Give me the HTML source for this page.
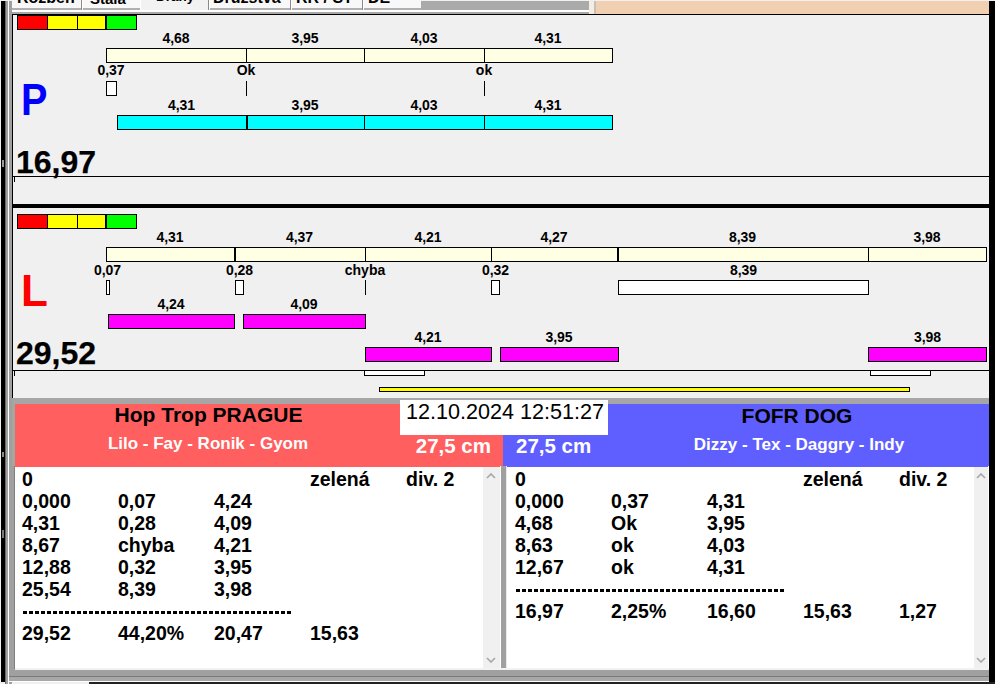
<!DOCTYPE html>
<html><head><meta charset="utf-8"><style>
html,body{margin:0;padding:0;}
body{width:995px;height:684px;overflow:hidden;position:relative;background:#f0f0f0;font-family:"Liberation Sans", sans-serif;}
body>div,body>svg{position:absolute;}
</style></head><body>
<div style="left:1px;top:1px;width:4px;height:681px;background:#000;"></div>
<div style="left:5px;top:1px;width:1px;height:683px;background:#6a6a6a;"></div>
<div style="left:6px;top:1px;width:2px;height:683px;background:#a0a0a0;"></div>
<div style="left:8px;top:1px;width:1px;height:683px;background:#ffffff;"></div>
<div style="left:9px;top:1px;width:3px;height:683px;background:#a0a0a0;"></div>
<div style="left:989px;top:1px;width:6px;height:683px;background:#000;"></div>
<div style="left:2px;top:160px;width:2px;height:7px;background:#9a9a9a;"></div>
<div style="left:2px;top:452px;width:2px;height:5px;background:#8a8a8a;"></div>
<div style="left:2px;top:530px;width:2px;height:8px;background:#7a7a7a;"></div>
<div style="left:12px;top:0px;width:409px;height:10px;background:#f8f8f8;"></div>
<div style="left:141px;top:0px;width:67px;height:10px;background:#f2f2f2;"></div>
<div style="left:12px;top:8px;width:129px;height:2px;background:#b0b0b0;"></div>
<div style="left:208px;top:8px;width:213px;height:2px;background:#b0b0b0;"></div>
<div style="left:81px;top:0px;width:1px;height:10px;background:#8a8a8a;"></div>
<div style="left:82px;top:0px;width:1px;height:10px;background:#ffffff;"></div>
<div style="left:208px;top:0px;width:1px;height:10px;background:#8a8a8a;"></div>
<div style="left:209px;top:0px;width:1px;height:10px;background:#ffffff;"></div>
<div style="left:290px;top:0px;width:1px;height:10px;background:#8a8a8a;"></div>
<div style="left:291px;top:0px;width:1px;height:10px;background:#ffffff;"></div>
<div style="left:362px;top:0px;width:1px;height:10px;background:#8a8a8a;"></div>
<div style="left:363px;top:0px;width:1px;height:10px;background:#ffffff;"></div>
<div style="left:140px;top:0px;width:1px;height:10px;background:#ffffff;"></div>
<div style="left:421px;top:1px;width:168px;height:9px;background:#aaaaaa;"></div>
<div style="left:12px;top:10px;width:577px;height:2px;background:#ffffff;"></div>
<div style="left:12px;top:12px;width:577px;height:2px;background:#a8a8a8;"></div>
<div style="left:589px;top:1px;width:5px;height:13px;background:#f4eee2;"></div>
<div style="left:594px;top:1px;width:2px;height:13px;background:#c8c0b8;"></div>
<div style="left:596px;top:1px;width:393px;height:13px;background:#f0d0b0;"></div>
<div style="left:12px;top:14px;width:977px;height:1px;background:#000;"></div>
<div style="left:17px;top:-10px;font:bold 16px/16px 'Liberation Sans', sans-serif;white-space:pre">Rozběh</div>
<div style="left:90px;top:-9px;font:bold 15px/15px 'Liberation Sans', sans-serif;white-space:pre">Stala</div>
<div style="left:156px;top:-10px;font:bold 13.5px/13.5px 'Liberation Sans', sans-serif;white-space:pre">Dráhy</div>
<div style="left:213px;top:-10px;font:bold 16px/16px 'Liberation Sans', sans-serif;white-space:pre">Družstva</div>
<div style="left:296px;top:-10px;font:bold 16px/16px 'Liberation Sans', sans-serif;white-space:pre">RR / ST</div>
<div style="left:368px;top:-10px;font:bold 16px/16px 'Liberation Sans', sans-serif;white-space:pre">DE</div>
<div style="left:12px;top:14px;width:1px;height:384px;background:#000;"></div>
<div style="left:17px;top:15px;width:120px;height:15px;background:#000;"></div>
<div style="left:18px;top:16px;width:29px;height:13px;background:#ff0000;"></div>
<div style="left:48px;top:16px;width:29px;height:13px;background:#ffff00;"></div>
<div style="left:78px;top:16px;width:27px;height:13px;background:#ffff00;"></div>
<div style="left:107px;top:16px;width:29px;height:13px;background:#00ff00;"></div>
<div style="left:106px;top:48px;width:141px;height:15px;background:#ffffe4;border:1px solid #000;box-sizing:border-box"></div>
<div style="left:246px;top:48px;width:119px;height:15px;background:#ffffe4;border:1px solid #000;box-sizing:border-box"></div>
<div style="left:364px;top:48px;width:121px;height:15px;background:#ffffe4;border:1px solid #000;box-sizing:border-box"></div>
<div style="left:484px;top:48px;width:129px;height:15px;background:#ffffe4;border:1px solid #000;box-sizing:border-box"></div>
<div style="top:31px;font-size:14px;line-height:14px;font-weight:bold;color:#000;white-space:pre;left:-124.0px;width:600px;text-align:center;">4,68</div>
<div style="top:31px;font-size:14px;line-height:14px;font-weight:bold;color:#000;white-space:pre;left:5.0px;width:600px;text-align:center;">3,95</div>
<div style="top:31px;font-size:14px;line-height:14px;font-weight:bold;color:#000;white-space:pre;left:124.0px;width:600px;text-align:center;">4,03</div>
<div style="top:31px;font-size:14px;line-height:14px;font-weight:bold;color:#000;white-space:pre;left:248.0px;width:600px;text-align:center;">4,31</div>
<div style="top:63px;font-size:14px;line-height:14px;font-weight:bold;color:#000;white-space:pre;left:-189px;width:600px;text-align:center;">0,37</div>
<div style="top:63px;font-size:14px;line-height:14px;font-weight:bold;color:#000;white-space:pre;left:-54px;width:600px;text-align:center;">Ok</div>
<div style="top:63px;font-size:14px;line-height:14px;font-weight:bold;color:#000;white-space:pre;left:184px;width:600px;text-align:center;">ok</div>
<div style="left:106px;top:81px;width:11px;height:15px;background:#fff;border:1px solid #000;box-sizing:border-box"></div>
<div style="left:246px;top:81px;width:1px;height:15px;background:#000;"></div>
<div style="left:484px;top:81px;width:1px;height:15px;background:#000;"></div>
<div style="left:117px;top:115px;width:130px;height:15px;background:#00ffff;border:1px solid #000;box-sizing:border-box"></div>
<div style="left:246px;top:115px;width:119px;height:15px;background:#00ffff;border:1px solid #000;box-sizing:border-box"></div>
<div style="left:364px;top:115px;width:121px;height:15px;background:#00ffff;border:1px solid #000;box-sizing:border-box"></div>
<div style="left:484px;top:115px;width:129px;height:15px;background:#00ffff;border:1px solid #000;box-sizing:border-box"></div>
<div style="left:247px;top:115px;width:1px;height:15px;background:#000;"></div>
<div style="top:98px;font-size:14px;line-height:14px;font-weight:bold;color:#000;white-space:pre;left:-118.5px;width:600px;text-align:center;">4,31</div>
<div style="top:98px;font-size:14px;line-height:14px;font-weight:bold;color:#000;white-space:pre;left:5.0px;width:600px;text-align:center;">3,95</div>
<div style="top:98px;font-size:14px;line-height:14px;font-weight:bold;color:#000;white-space:pre;left:124.0px;width:600px;text-align:center;">4,03</div>
<div style="top:98px;font-size:14px;line-height:14px;font-weight:bold;color:#000;white-space:pre;left:248.0px;width:600px;text-align:center;">4,31</div>
<div style="top:78px;font-size:44px;line-height:44px;font-weight:bold;color:#0000ff;white-space:pre;transform:scaleX(0.9);transform-origin:0 0;left:21px;">P</div>
<div style="top:146px;font-size:32px;line-height:32px;font-weight:bold;color:#000;white-space:pre;-webkit-text-stroke:0.25px #000;left:16px;">16,97</div>
<div style="left:12px;top:176px;width:977px;height:1px;background:#000;"></div>
<div style="left:14px;top:177px;width:1px;height:5px;background:#000;"></div>
<div style="left:12px;top:204px;width:977px;height:4px;background:#000;"></div>
<div style="left:17px;top:214px;width:120px;height:15px;background:#000;"></div>
<div style="left:18px;top:215px;width:29px;height:13px;background:#ff0000;"></div>
<div style="left:48px;top:215px;width:29px;height:13px;background:#ffff00;"></div>
<div style="left:78px;top:215px;width:27px;height:13px;background:#ffff00;"></div>
<div style="left:107px;top:215px;width:29px;height:13px;background:#00ff00;"></div>
<div style="left:106px;top:247px;width:129px;height:15px;background:#ffffe4;border:1px solid #000;box-sizing:border-box"></div>
<div style="left:234px;top:247px;width:132px;height:15px;background:#ffffe4;border:1px solid #000;box-sizing:border-box"></div>
<div style="left:365px;top:247px;width:127px;height:15px;background:#ffffe4;border:1px solid #000;box-sizing:border-box"></div>
<div style="left:491px;top:247px;width:127px;height:15px;background:#ffffe4;border:1px solid #000;box-sizing:border-box"></div>
<div style="left:617px;top:247px;width:252px;height:15px;background:#ffffe4;border:1px solid #000;box-sizing:border-box"></div>
<div style="left:868px;top:247px;width:119px;height:15px;background:#ffffe4;border:1px solid #000;box-sizing:border-box"></div>
<div style="left:235px;top:247px;width:1px;height:15px;background:#000;"></div>
<div style="left:618px;top:247px;width:1px;height:15px;background:#000;"></div>
<div style="top:230px;font-size:14px;line-height:14px;font-weight:bold;color:#000;white-space:pre;left:-130.0px;width:600px;text-align:center;">4,31</div>
<div style="top:230px;font-size:14px;line-height:14px;font-weight:bold;color:#000;white-space:pre;left:-0.5px;width:600px;text-align:center;">4,37</div>
<div style="top:230px;font-size:14px;line-height:14px;font-weight:bold;color:#000;white-space:pre;left:128.0px;width:600px;text-align:center;">4,21</div>
<div style="top:230px;font-size:14px;line-height:14px;font-weight:bold;color:#000;white-space:pre;left:254.0px;width:600px;text-align:center;">4,27</div>
<div style="top:230px;font-size:14px;line-height:14px;font-weight:bold;color:#000;white-space:pre;left:442.5px;width:600px;text-align:center;">8,39</div>
<div style="top:230px;font-size:14px;line-height:14px;font-weight:bold;color:#000;white-space:pre;left:627.0px;width:600px;text-align:center;">3,98</div>
<div style="top:263px;font-size:14px;line-height:14px;font-weight:bold;color:#000;white-space:pre;left:-192.5px;width:600px;text-align:center;">0,07</div>
<div style="top:263px;font-size:14px;line-height:14px;font-weight:bold;color:#000;white-space:pre;left:-60.5px;width:600px;text-align:center;">0,28</div>
<div style="top:263px;font-size:14px;line-height:14px;font-weight:bold;color:#000;white-space:pre;left:65px;width:600px;text-align:center;">chyba</div>
<div style="top:263px;font-size:14px;line-height:14px;font-weight:bold;color:#000;white-space:pre;left:195.5px;width:600px;text-align:center;">0,32</div>
<div style="top:263px;font-size:14px;line-height:14px;font-weight:bold;color:#000;white-space:pre;left:443.5px;width:600px;text-align:center;">8,39</div>
<div style="left:106px;top:280px;width:4px;height:15px;background:#fff;border:1px solid #000;box-sizing:border-box"></div>
<div style="left:235px;top:280px;width:9px;height:15px;background:#fff;border:1px solid #000;box-sizing:border-box"></div>
<div style="left:365px;top:280px;width:1px;height:15px;background:#000;"></div>
<div style="left:491px;top:280px;width:9px;height:15px;background:#fff;border:1px solid #000;box-sizing:border-box"></div>
<div style="left:618px;top:280px;width:251px;height:15px;background:#fff;border:1px solid #000;box-sizing:border-box"></div>
<div style="left:108px;top:314px;width:127px;height:15px;background:#ff00ff;border:1px solid #000;box-sizing:border-box"></div>
<div style="left:243px;top:314px;width:123px;height:15px;background:#ff00ff;border:1px solid #000;box-sizing:border-box"></div>
<div style="top:297px;font-size:14px;line-height:14px;font-weight:bold;color:#000;white-space:pre;left:-129px;width:600px;text-align:center;">4,24</div>
<div style="top:297px;font-size:14px;line-height:14px;font-weight:bold;color:#000;white-space:pre;left:4px;width:600px;text-align:center;">4,09</div>
<div style="left:365px;top:347px;width:127px;height:15px;background:#ff00ff;border:1px solid #000;box-sizing:border-box"></div>
<div style="left:500px;top:347px;width:119px;height:15px;background:#ff00ff;border:1px solid #000;box-sizing:border-box"></div>
<div style="left:868px;top:347px;width:119px;height:15px;background:#ff00ff;border:1px solid #000;box-sizing:border-box"></div>
<div style="top:330px;font-size:14px;line-height:14px;font-weight:bold;color:#000;white-space:pre;left:128px;width:600px;text-align:center;">4,21</div>
<div style="top:330px;font-size:14px;line-height:14px;font-weight:bold;color:#000;white-space:pre;left:259px;width:600px;text-align:center;">3,95</div>
<div style="top:330px;font-size:14px;line-height:14px;font-weight:bold;color:#000;white-space:pre;left:627.5px;width:600px;text-align:center;">3,98</div>
<div style="top:269px;font-size:44px;line-height:44px;font-weight:bold;color:#ff0000;white-space:pre;left:21px;">L</div>
<div style="top:337px;font-size:32px;line-height:32px;font-weight:bold;color:#000;white-space:pre;-webkit-text-stroke:0.25px #000;left:16px;">29,52</div>
<div style="left:12px;top:370px;width:977px;height:1px;background:#000;"></div>
<div style="left:14px;top:371px;width:1px;height:5px;background:#000;"></div>
<div style="left:364px;top:370px;width:61px;height:6px;background:#fff;border:1px solid #000;box-sizing:border-box"></div>
<div style="left:870px;top:370px;width:61px;height:6px;background:#fff;border:1px solid #000;box-sizing:border-box"></div>
<div style="left:379px;top:387px;width:531px;height:5px;background:#ffff00;border:1px solid #000;box-sizing:border-box"></div>
<div style="left:12px;top:398px;width:977px;height:6px;background:#a6a6a6;"></div>
<div style="left:12px;top:404px;width:3px;height:63px;background:#a0a8a0;"></div>
<div style="left:15px;top:404px;width:488px;height:63px;background:#ff5f5f;"></div>
<div style="left:503px;top:404px;width:486px;height:63px;background:#5f5fff;"></div>
<div style="top:404px;font-size:21px;line-height:21px;font-weight:bold;color:#000;white-space:pre;left:-91.5px;width:600px;text-align:center;">Hop Trop PRAGUE</div>
<div style="top:435px;font-size:17px;line-height:17px;font-weight:bold;color:#fff;white-space:pre;left:-92px;width:600px;text-align:center;">Lilo - Fay - Ronik - Gyom</div>
<div style="top:436px;font-size:20.5px;line-height:20.5px;font-weight:bold;color:#fff;white-space:pre;left:-109px;width:600px;text-align:right;">27,5 cm</div>
<div style="top:405px;font-size:21px;line-height:21px;font-weight:bold;color:#000;white-space:pre;left:497px;width:600px;text-align:center;">FOFR DOG</div>
<div style="top:436px;font-size:17px;line-height:17px;font-weight:bold;color:#fff;white-space:pre;left:499px;width:600px;text-align:center;">Dizzy - Tex - Daggry - Indy</div>
<div style="top:436px;font-size:20.5px;line-height:20.5px;font-weight:bold;color:#fff;white-space:pre;left:516px;">27,5 cm</div>
<div style="left:400px;top:400px;width:208px;height:35px;background:#fff;"></div>
<div style="top:401px;font-size:21.6px;line-height:21.6px;font-weight:normal;color:#000;white-space:pre;left:406px;">12.10.2024 12:51:27</div>
<div style="left:9px;top:466px;width:6px;height:203px;background:#a0a0a0;"></div>
<div style="left:15px;top:467px;width:468px;height:202px;background:#fff;"></div>
<div style="left:483px;top:467px;width:17px;height:202px;background:#f0f0f0;"></div>
<div style="left:500px;top:466px;width:1px;height:203px;background:#fff;"></div>
<div style="left:501px;top:466px;width:5px;height:203px;background:#a0a0a0;"></div>
<div style="left:506px;top:466px;width:1px;height:203px;background:#e8e8e8;"></div>
<div style="left:507px;top:467px;width:467px;height:202px;background:#fff;"></div>
<div style="left:974px;top:467px;width:14px;height:202px;background:#f0f0f0;"></div>
<div style="left:988px;top:466px;width:1px;height:203px;background:#fff;"></div>
<svg style="left:485.5px;top:473px" width="10" height="6"><path d="M1 5 L5 1 L9 5" stroke="#a6a6a6" stroke-width="1.6" fill="none"/></svg>
<svg style="left:485.5px;top:657px" width="10" height="6"><path d="M1 1 L5 5 L9 1" stroke="#a6a6a6" stroke-width="1.6" fill="none"/></svg>
<svg style="left:976px;top:473px" width="10" height="6"><path d="M1 5 L5 1 L9 5" stroke="#a6a6a6" stroke-width="1.6" fill="none"/></svg>
<svg style="left:976px;top:657px" width="10" height="6"><path d="M1 1 L5 5 L9 1" stroke="#a6a6a6" stroke-width="1.6" fill="none"/></svg>
<div style="top:470px;font-size:19.5px;line-height:19.5px;font-weight:bold;color:#000;white-space:pre;left:22px;">0</div>
<div style="top:470px;font-size:19.5px;line-height:19.5px;font-weight:bold;color:#000;white-space:pre;left:310px;">zelená</div>
<div style="top:470px;font-size:19.5px;line-height:19.5px;font-weight:bold;color:#000;white-space:pre;left:406px;">div. 2</div>
<div style="top:492px;font-size:19.5px;line-height:19.5px;font-weight:bold;color:#000;white-space:pre;left:22px;">0,000</div>
<div style="top:492px;font-size:19.5px;line-height:19.5px;font-weight:bold;color:#000;white-space:pre;left:118px;">0,07</div>
<div style="top:492px;font-size:19.5px;line-height:19.5px;font-weight:bold;color:#000;white-space:pre;left:214px;">4,24</div>
<div style="top:514px;font-size:19.5px;line-height:19.5px;font-weight:bold;color:#000;white-space:pre;left:22px;">4,31</div>
<div style="top:514px;font-size:19.5px;line-height:19.5px;font-weight:bold;color:#000;white-space:pre;left:118px;">0,28</div>
<div style="top:514px;font-size:19.5px;line-height:19.5px;font-weight:bold;color:#000;white-space:pre;left:214px;">4,09</div>
<div style="top:536px;font-size:19.5px;line-height:19.5px;font-weight:bold;color:#000;white-space:pre;left:22px;">8,67</div>
<div style="top:536px;font-size:19.5px;line-height:19.5px;font-weight:bold;color:#000;white-space:pre;left:118px;">chyba</div>
<div style="top:536px;font-size:19.5px;line-height:19.5px;font-weight:bold;color:#000;white-space:pre;left:214px;">4,21</div>
<div style="top:558px;font-size:19.5px;line-height:19.5px;font-weight:bold;color:#000;white-space:pre;left:22px;">12,88</div>
<div style="top:558px;font-size:19.5px;line-height:19.5px;font-weight:bold;color:#000;white-space:pre;left:118px;">0,32</div>
<div style="top:558px;font-size:19.5px;line-height:19.5px;font-weight:bold;color:#000;white-space:pre;left:214px;">3,95</div>
<div style="top:580px;font-size:19.5px;line-height:19.5px;font-weight:bold;color:#000;white-space:pre;left:22px;">25,54</div>
<div style="top:580px;font-size:19.5px;line-height:19.5px;font-weight:bold;color:#000;white-space:pre;left:118px;">8,39</div>
<div style="top:580px;font-size:19.5px;line-height:19.5px;font-weight:bold;color:#000;white-space:pre;left:214px;">3,98</div>
<div style="left:23px;top:611px;width:270px;height:3px;background:repeating-linear-gradient(90deg,#000 0,#000 4.5px,transparent 4.5px,transparent 6px)"></div>
<div style="top:624px;font-size:19.5px;line-height:19.5px;font-weight:bold;color:#000;white-space:pre;left:22px;">29,52</div>
<div style="top:624px;font-size:19.5px;line-height:19.5px;font-weight:bold;color:#000;white-space:pre;left:118px;">44,20%</div>
<div style="top:624px;font-size:19.5px;line-height:19.5px;font-weight:bold;color:#000;white-space:pre;left:214px;">20,47</div>
<div style="top:624px;font-size:19.5px;line-height:19.5px;font-weight:bold;color:#000;white-space:pre;left:310px;">15,63</div>
<div style="top:470px;font-size:19.5px;line-height:19.5px;font-weight:bold;color:#000;white-space:pre;left:515px;">0</div>
<div style="top:470px;font-size:19.5px;line-height:19.5px;font-weight:bold;color:#000;white-space:pre;left:803px;">zelená</div>
<div style="top:470px;font-size:19.5px;line-height:19.5px;font-weight:bold;color:#000;white-space:pre;left:899px;">div. 2</div>
<div style="top:492px;font-size:19.5px;line-height:19.5px;font-weight:bold;color:#000;white-space:pre;left:515px;">0,000</div>
<div style="top:492px;font-size:19.5px;line-height:19.5px;font-weight:bold;color:#000;white-space:pre;left:611px;">0,37</div>
<div style="top:492px;font-size:19.5px;line-height:19.5px;font-weight:bold;color:#000;white-space:pre;left:707px;">4,31</div>
<div style="top:514px;font-size:19.5px;line-height:19.5px;font-weight:bold;color:#000;white-space:pre;left:515px;">4,68</div>
<div style="top:514px;font-size:19.5px;line-height:19.5px;font-weight:bold;color:#000;white-space:pre;left:611px;">Ok</div>
<div style="top:514px;font-size:19.5px;line-height:19.5px;font-weight:bold;color:#000;white-space:pre;left:707px;">3,95</div>
<div style="top:536px;font-size:19.5px;line-height:19.5px;font-weight:bold;color:#000;white-space:pre;left:515px;">8,63</div>
<div style="top:536px;font-size:19.5px;line-height:19.5px;font-weight:bold;color:#000;white-space:pre;left:611px;">ok</div>
<div style="top:536px;font-size:19.5px;line-height:19.5px;font-weight:bold;color:#000;white-space:pre;left:707px;">4,03</div>
<div style="top:558px;font-size:19.5px;line-height:19.5px;font-weight:bold;color:#000;white-space:pre;left:515px;">12,67</div>
<div style="top:558px;font-size:19.5px;line-height:19.5px;font-weight:bold;color:#000;white-space:pre;left:611px;">ok</div>
<div style="top:558px;font-size:19.5px;line-height:19.5px;font-weight:bold;color:#000;white-space:pre;left:707px;">4,31</div>
<div style="left:516px;top:589px;width:270px;height:3px;background:repeating-linear-gradient(90deg,#000 0,#000 4.5px,transparent 4.5px,transparent 6px)"></div>
<div style="top:602px;font-size:19.5px;line-height:19.5px;font-weight:bold;color:#000;white-space:pre;left:515px;">16,97</div>
<div style="top:602px;font-size:19.5px;line-height:19.5px;font-weight:bold;color:#000;white-space:pre;left:611px;">2,25%</div>
<div style="top:602px;font-size:19.5px;line-height:19.5px;font-weight:bold;color:#000;white-space:pre;left:707px;">16,60</div>
<div style="top:602px;font-size:19.5px;line-height:19.5px;font-weight:bold;color:#000;white-space:pre;left:803px;">15,63</div>
<div style="top:602px;font-size:19.5px;line-height:19.5px;font-weight:bold;color:#000;white-space:pre;left:899px;">1,27</div>
<div style="left:9px;top:466px;width:6px;height:204px;background:#a0a0a0;"></div>
<div style="left:14px;top:466px;width:1px;height:203px;background:#808080;"></div>
<div style="left:15px;top:668px;width:974px;height:2px;background:#f2f2f2;"></div>
<div style="left:9px;top:670px;width:980px;height:6px;background:#a0a0a0;"></div>
<div style="left:9px;top:676px;width:980px;height:1px;background:#7a7a7a;"></div>
<div style="left:9px;top:677px;width:980px;height:4px;background:#a8a8a8;"></div>
<div style="left:8px;top:681px;width:981px;height:1px;background:#ffffff;"></div>
<div style="left:89px;top:682px;width:906px;height:2px;background:#222;"></div>
</body></html>
